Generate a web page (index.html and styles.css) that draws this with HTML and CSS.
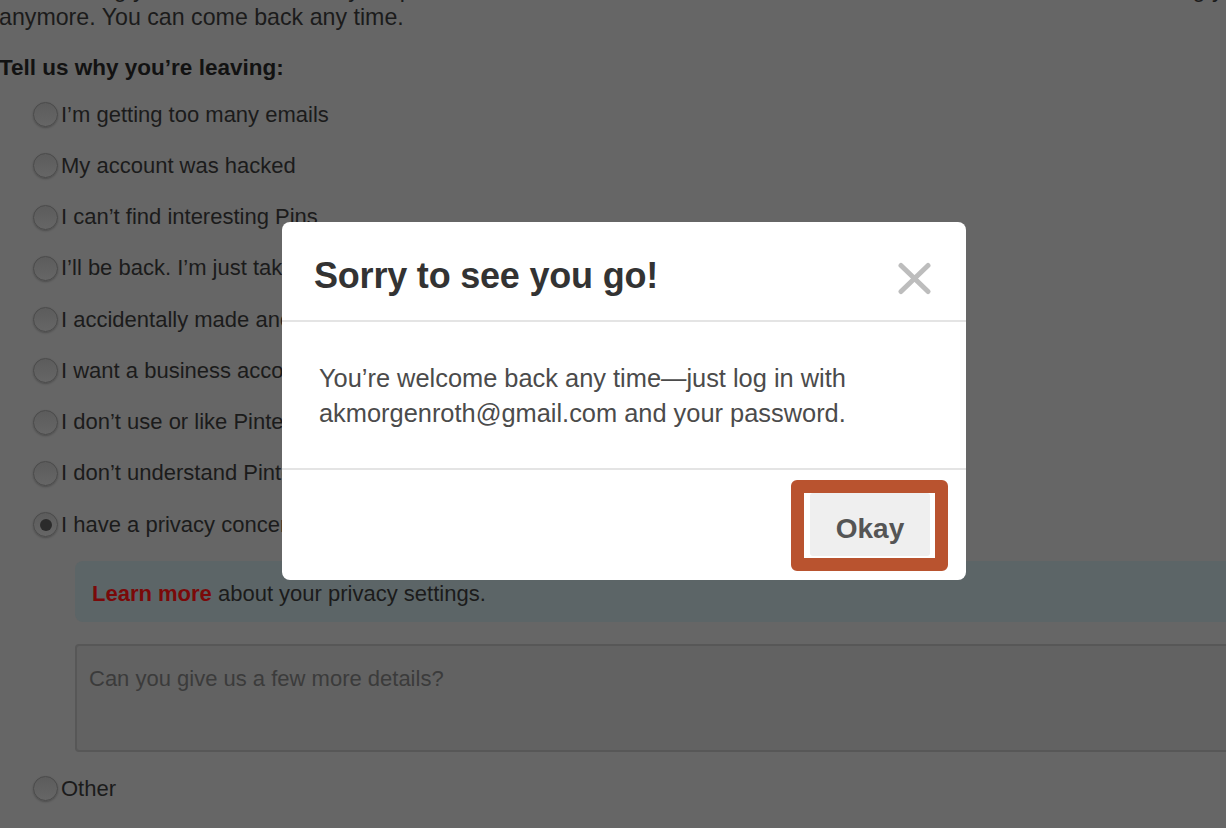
FILE: index.html
```html
<!DOCTYPE html>
<html lang="en">
<head>
<meta charset="utf-8">
<title>Deactivate account</title>
<link rel="stylesheet" href="styles.css">
</head>
<body>
<main class="page">
  <p class="intro"><span class="intro-line">Deactivating your account means your profile, boards and Pins won’t be visible on Pinterest, and we won’t be sending you emails</span><br>anymore. You can come back any time.</p>
  <h2 class="reasons-title">Tell us why you’re leaving:</h2>
  <ul class="reasons">
    <li class="reason"><span class="radio"></span><span class="reason-label">I’m getting too many emails</span></li>
    <li class="reason"><span class="radio"></span><span class="reason-label">My account was hacked</span></li>
    <li class="reason"><span class="radio"></span><span class="reason-label">I can’t find interesting Pins</span></li>
    <li class="reason"><span class="radio"></span><span class="reason-label">I’ll be back. I’m just taking a break</span></li>
    <li class="reason"><span class="radio"></span><span class="reason-label">I accidentally made another account</span></li>
    <li class="reason"><span class="radio"></span><span class="reason-label">I want a business account instead</span></li>
    <li class="reason"><span class="radio"></span><span class="reason-label">I don’t use or like Pinterest</span></li>
    <li class="reason"><span class="radio"></span><span class="reason-label">I don’t understand Pinterest</span></li>
    <li class="reason"><span class="radio radio-checked"></span><span class="reason-label">I have a privacy concern</span></li>
  </ul>
  <div class="privacy-note"><a class="learn-more" href="#">Learn more</a> about your privacy settings.</div>
  <div class="details">Can you give us a few more details?</div>
  <ul class="reasons reasons-other">
    <li class="reason"><span class="radio"></span><span class="reason-label">Other</span></li>
  </ul>
</main>

<section class="modal" role="dialog" aria-labelledby="modal-title">
  <header class="modal-header">
    <h1 class="modal-title" id="modal-title">Sorry to see you go!</h1>
    <button class="modal-close" aria-label="Close">
      <svg width="35" height="33" viewBox="0 0 35 33" aria-hidden="true">
        <path d="M4 3.5 L31 29.5 M31 3.5 L4 29.5" stroke="#bdbdbd" stroke-width="5" stroke-linecap="round" fill="none"/>
      </svg>
    </button>
  </header>
  <div class="modal-body">
    <p class="modal-text">You’re welcome back any time—just log in with<br>akmorgenroth@gmail.com and your password.</p>
  </div>
  <footer class="modal-footer">
    <div class="highlight">
      <button class="okay-btn">Okay</button>
    </div>
  </footer>
</section>
</body>
</html>
```

FILE: styles.css
```css
html, body {
  margin: 0;
  padding: 0;
}

body {
  background: #666666;
  width: 1226px;
  height: 828px;
  overflow: hidden;
  position: relative;
  font-family: "Liberation Sans", Helvetica, Arial, sans-serif;
  color: #1b1b1b;
}

.page {
  width: 1400px;
  padding-left: 0;
  margin-left: -1px;
  font-size: 22px;
  line-height: 26px;
}

.intro {
  margin: -25px 0 0;
  font-size: 23.2px;
  line-height: 28px;
  white-space: nowrap;
}

.reasons-title {
  margin: 24px 0 0;
  font-size: 22.5px;
  line-height: 26px;
  font-weight: bold;
  color: #121212;
}

.reasons {
  list-style: none;
  margin: 8px 0 0;
  padding: 0 0 0 34px;
}

.reason {
  height: 51.25px;
  display: flex;
  align-items: center;
  gap: 3px;
}

.radio {
  box-sizing: border-box;
  width: 25px;
  height: 25px;
  border-radius: 50%;
  border: 1px solid #4a4a4a;
  background: linear-gradient(#5c5c5c, #666666);
  box-shadow: 0 1px 2px rgba(0, 0, 0, 0.25);
  display: flex;
  align-items: center;
  justify-content: center;
  flex: none;
}

.radio-checked::after {
  content: "";
  width: 12px;
  height: 12px;
  border-radius: 50%;
  background: #2b2b2b;
}

.privacy-note {
  margin: 11px 0 0 76px;
  height: 61px;
  box-sizing: border-box;
  padding: 20px 17px 15px;
  background: #5c6567;
  border-radius: 8px;
}

.learn-more {
  color: #7a0909;
  font-weight: bold;
  text-decoration: none;
}

.details {
  margin: 22px 0 0 76px;
  height: 108px;
  box-sizing: border-box;
  padding: 20px 12px;
  background: #626262;
  border: 2px solid #575757;
  border-radius: 4px;
  color: #3b3b3b;
}

.reasons-other {
  margin-top: 11px;
}

/* Modal */
.modal {
  position: absolute;
  top: 222px;
  left: 282px;
  width: 684px;
  height: 358px;
  background: #ffffff;
  border-radius: 8px;
  display: flex;
  flex-direction: column;
  overflow: hidden;
}

.modal-header {
  height: 100px;
  box-sizing: border-box;
  padding: 10px 34px 0 32px;
  display: flex;
  align-items: center;
  justify-content: space-between;
  border-bottom: 2px solid #e4e4e4;
}

.modal-title {
  margin: 0;
  font-size: 36px;
  line-height: 40px;
  font-weight: bold;
  color: #333333;
  letter-spacing: -0.2px;
}

.modal-close {
  border: 0;
  padding: 0;
  background: none;
  width: 35px;
  height: 33px;
  display: block;
  margin-top: 4px;
}

.modal-close svg {
  display: block;
}

.modal-body {
  height: 148px;
  box-sizing: border-box;
  padding: 39px 32px 0 37px;
  border-bottom: 2px solid #e4e4e4;
}

.modal-text {
  margin: 0;
  font-size: 25.4px;
  line-height: 35px;
  color: #4b4b4b;
}

.modal-footer {
  flex: 1;
  display: flex;
  align-items: center;
  justify-content: flex-end;
  padding-right: 18px;
}

.highlight {
  border: 13px solid #b9532f;
  border-radius: 6px;
  padding: 0 5px 2px 6px;
  background: #ffffff;
  display: flex;
}

.okay-btn {
  width: 120px;
  height: 63px;
  border: 0;
  border-radius: 3px;
  background: #efefef;
  color: #555555;
  font-family: "Liberation Sans", Helvetica, Arial, sans-serif;
  font-size: 28px;
  font-weight: bold;
  padding: 9px 0 0;
}
```
